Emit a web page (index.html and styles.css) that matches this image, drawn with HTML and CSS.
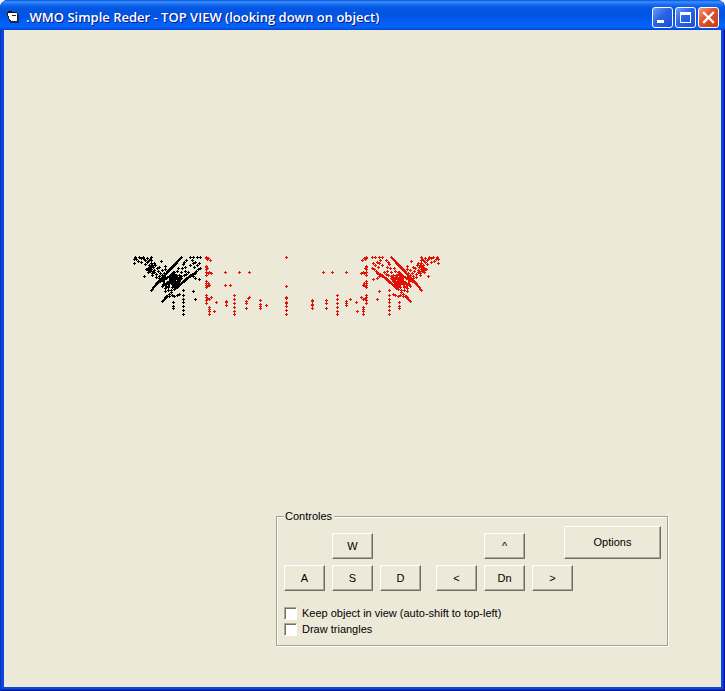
FILE: index.html
```html
<!DOCTYPE html>
<html lang="en">
<head>
<meta charset="utf-8">
<title>.WMO Simple Reder</title>
<link rel="stylesheet" href="styles.css">
</head>
<body>
<div class="window">
  <header class="titlebar">
    <svg class="app-icon" width="14" height="14" viewBox="0 0 14 14" shape-rendering="crispEdges" aria-hidden="true">
      <path d="M3 5h10v8H4v-2H3z" fill="#0a2a80"/>
      <path d="M2 2h4v1h5v8H5v-1H3V8H2z" fill="#fff"/>
      <path d="M2 1h4v1h5v1H2z" fill="#111"/>
      <path d="M11 3h1v9H5v-1h6zM1 2h1v4H1zM2 6h1v3H2zM3 9h1v1H3zM6 5h4v1H6z" fill="#222"/>
    </svg>
    <h1 class="title">.WMO Simple Reder - TOP VIEW (looking down on object)</h1>
    <div class="caption-buttons">
      <button class="caption" type="button" aria-label="Minimize"><svg width="19" height="19" viewBox="0 0 19 19" shape-rendering="crispEdges"><path d="M4 12h7v3H4z" fill="#fff"/></svg></button>
      <button class="caption" type="button" aria-label="Maximize"><svg width="19" height="19" viewBox="0 0 19 19" shape-rendering="crispEdges"><path d="M4 4h11v11H4zM5 7v7h9V7z" fill="#fff" fill-rule="evenodd"/></svg></button>
      <button class="caption close" type="button" aria-label="Close"><svg width="19" height="19" viewBox="0 0 19 19"><path d="M5 5l9 9M14 5l-9 9" stroke="#fff" stroke-width="2.3" stroke-linecap="square"/></svg></button>
    </div>
  </header>
  <main class="client">
    <svg class="plot" role="img" aria-label="Object vertices, top view" shape-rendering="crispEdges">
      <defs>
        <g id="wing">
          <path d="M12 12h0M15 12h0M19 12h0M22 12h0M31 12h0M20 15h0M19 18h0M26 15h0M28 17h0M13 18h0M15 20h0M17 17h0M12 23h0M18 22h0M22 20h0M29 19h0M36 18h0M51 16h0M13 34h0M17 33h0M19 31h0M22 30h0M17 28h0M27 22h0M30 23h0M34 23h0M27 26h0M31 27h0M35 26h0M33 30h0M28 30h0M38 27h0M36 30h0M31 33h0M24 27h0M26 29h0"/>
          <path d="M32 13h0M34 15h0M36 18h0M38 20h0M40 22h0M42 24h0M44 26h0M46 28h0M48 31h0M50 33h0M52 35h0M54 37h0M56 39h0M58 41h0M60 44h0M61 45h0M33 14L59 42"/>
          <path d="M14 24h0M16 26h0M18 28h0M20 29h0M22 31h0M24 32h0M26 34h0M28 36h0M30 37h0M32 39h0M34 40h0M36 42h0M38 44h0M41 47h0M43 49h0M45 51h0M47 53h0M49 55h0M50 56h0M46 51L48 54M24 32L38 44"/>
          <path d="M38 29L33 35L38 41L42 36L47 39M36 33L45 37M41 29L37 36L40 42M43 31L39 38M45 32L52 36M33 36L40 38M42 33L44 42M39 27L42 32M35 34h0M49 39h0M47 43h0M44 45h0M40 50h0M38 51h0M35 50h0M33 49h0M43 51h0M50 41h0M53 33h0M47 46h0M41 45h0M49 36L46 42M31 31L35 36"/>
          <path d="M45 26h0M47 24h0M50 25h0M52 28h0M54 26h0M56 29h0M50 30h0M55 23h0M58 25h0M59 22h0M61 24h0M63 20h0M61 18h0M64 23h0M62 26h0M60 28h0M65 17h0M63 15h0M67 19h0M57 20h0M53 22h0M48 28h0M47 21h0M60 30h0M58 27h0M56 32h0M66 24h0M53 31h0M58 18h0M64 27h0M61 21h0M63 22h0M60 20L64 25M59 26h0"/>
          <path d="M61 12h0M62 14h0M65 13h0M67 15h0M69 12h0M71 13h0M73 12h0M77 12h0M78 14h0M74 16h0M76 14h0M78 18h0M71 17h0M68 14h0M68 31h0M61 15h0M64 16h0"/>
          <path d="M19 46h0M17 54h0M29 45h0M29 50h0M29 54h0M29 57h0M29 61h0M29 65h0M29 69h0M39 57h0M39 61h0M39 63h0"/>
        </g>
        <g id="side">
          <path d="M6 12h0M4 13h0M2 15h0M6 13h0M6 21h0M6 22h0M6 24h0M6 27h0M3 27h0M1 28h0M6 30h0M6 36h0M6 38h0M6 40h0M6 42h0M3 40h0M4 38h0M6 50h0M6 52h0M6 55h0M6 58h0M3 54h0M1 52h0M3 62h0M3 64h0M3 66h0M3 69h0M5 14h0M5 23h0M4 28h0M5 41h0M5 53h0"/>
        </g>
      </defs>
      <g class="scene">
        <use class="black" href="#wing" transform="translate(212 245) scale(-1 1)"/>
        <use href="#wing" transform="translate(360 245)"/>
        <use href="#side" transform="translate(212 245) scale(-1 1)"/>
        <use href="#side" transform="translate(360 245)"/>
        <path d="M286 257h0M286 286h0M286 297h0M286 298h0M286 302h0M286 303h0M286 306h0M286 310h0M286 314h0"/>
        <path d="M216 302h0M214 311h0M225 272h0M239 272h0M249 272h0M225 285h0M230 285h0M226 301h0M226 302h0M226 305h0M234 295h0M234 299h0M234 303h0M234 307h0M234 311h0M234 314h0M249 297h0M248 298h0M246 301h0M246 303h0M246 308h0M260 300h0M260 304h0M260 306h0M260 308h0M266 305h0"/>
        <path d="M323 272h0M332 272h0M346 272h0M312 300h0M312 301h0M312 304h0M312 305h0M312 308h0M326 300h0M326 303h0M326 308h0M337 295h0M337 299h0M337 303h0M337 307h0M337 311h0M337 314h0M346 301h0M346 303h0M346 305h0M350 299h0M356 302h0M357 311h0"/>
      </g>
    </svg>
    <fieldset class="controls">
      <legend>Controles</legend>
      <div class="row top">
        <button class="key w" type="button">W</button>
        <button class="key up" type="button">^</button>
        <button class="key options" type="button">Options</button>
      </div>
      <div class="row">
        <div class="keys">
          <button class="key" type="button">A</button>
          <button class="key" type="button">S</button>
          <button class="key" type="button">D</button>
        </div>
        <div class="keys">
          <button class="key" type="button">&lt;</button>
          <button class="key" type="button">Dn</button>
          <button class="key" type="button">&gt;</button>
        </div>
      </div>
      <div class="checks">
        <label class="check"><input type="checkbox">Keep object in view (auto-shift to top-left)</label>
        <label class="check"><input type="checkbox">Draw triangles</label>
      </div>
    </fieldset>
  </main>
</div>
</body>
</html>
```
FILE: styles.css
```css
* {
  box-sizing: border-box;
}

body {
  margin: 0;
  background: #f4f5ee;
  font: 11px/16px "Liberation Sans", Arial, sans-serif;
  color: #000;
}

.window {
  display: flex;
  flex-direction: column;
  min-height: 100vh;
  padding: 0 4px 4px;
  background: #0b47dc;
  border-radius: 8px 8px 0 0;
  box-shadow: inset 1px 0 #0831c8, inset -1px -1px #00138c, inset -2px -2px #0831c8;
  overflow: hidden;
}

.titlebar {
  display: flex;
  align-items: center;
  height: 30px;
  margin: 0 -4px;
  padding: 4px 6px 0;
  background: linear-gradient(#0a52d8 0, #3a92ff 2px, #1a70f4 4px, #0557e2 8px, #0054e3 16px, #0461f8 24px, #0462fa 27px, #0048cf 30px);
}

.app-icon {
  flex: none;
  margin-right: 6px;
}

.title {
  flex: 1;
  margin: 0;
  overflow: hidden;
  font: 600 13px/20px "Open Sans", "Noto Sans", sans-serif;
  color: #fff;
  text-shadow: 1px 1px #0a1883;
  white-space: nowrap;
}

.caption-buttons {
  display: flex;
  gap: 2px;
}

.caption {
  width: 21px;
  height: 21px;
  padding: 0;
  border: 1px solid #fff;
  border-radius: 3px;
  background: linear-gradient(135deg, #6f9cf5, #2a63e6 45%, #1c50d6);
}

.caption svg {
  display: block;
}

.caption.close {
  background: linear-gradient(135deg, #f09a80, #e0512c 45%, #c83c14);
}

.client {
  flex: 1;
  display: flex;
  flex-direction: column;
  align-items: flex-end;
  padding: 0 53px 41px 0;
  background: #ece9d8;
}

.plot {
  flex: 1;
  align-self: stretch;
  width: 100%;
  overflow: visible;
}

.scene {
  transform: translate(-3.5px, -29.5px);
  fill: none;
  stroke: #e01208;
  stroke-width: 2.6;
  stroke-linecap: round;
}

.black {
  stroke: #000;
}

.controls {
  width: 392px;
  margin: 0;
  padding: 3px 6px 8px 7px;
  border: 1px solid #a5a294;
  box-shadow: 1px 1px #fff, inset 1px 1px #fff;
}

.controls legend {
  padding: 0 2px 0 1px;
  line-height: 14px;
  background: #ece9d8;
}

.row {
  display: flex;
  gap: 15px;
}

.row.top {
  gap: 0;
  align-items: flex-end;
  margin-bottom: 6px;
}

.keys {
  display: flex;
  gap: 7px;
}

.key {
  width: 41px;
  height: 26px;
  padding: 0 0 1px;
  border: 1px solid;
  border-color: #fff #716f64 #716f64 #fff;
  box-shadow: inset -1px -1px #aca899;
  background: #ece9d8;
  font: inherit;
  color: inherit;
}

.w {
  margin-left: 48px;
}

.up {
  margin-left: 111px;
}

.options {
  width: 97px;
  height: 33px;
  margin-left: auto;
}

.checks {
  margin-top: 14px;
}

.check {
  display: flex;
  align-items: center;
}

.check input {
  appearance: none;
  width: 13px;
  height: 13px;
  margin: 0 5px 0 0;
  border: 1px solid;
  border-color: #aca899 #fff #fff #aca899;
  background: #fff;
  box-shadow: inset 1px 1px #716f64;
}

.check input:checked {
  background: #716f64;
}
```
